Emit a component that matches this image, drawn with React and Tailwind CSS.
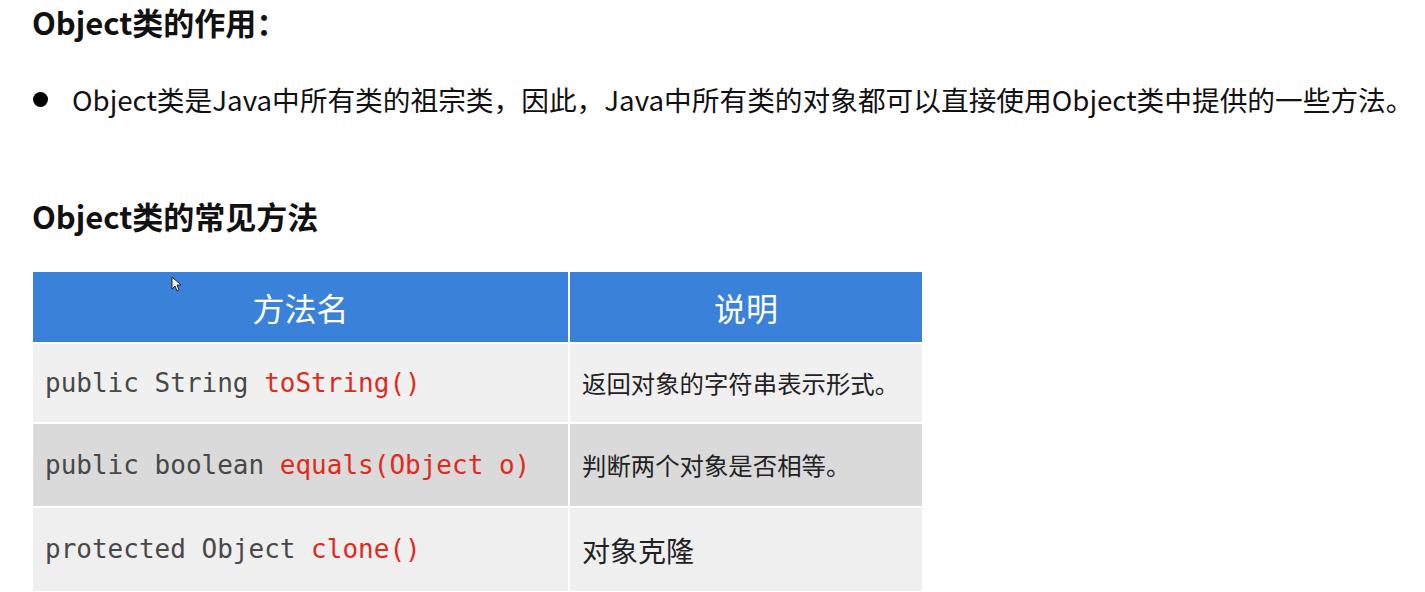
const cjk = { fontFamily: '"Noto Sans CJK SC", "Noto Sans", sans-serif' }
const mono = { fontFamily: '"DejaVu Sans Mono", "Liberation Mono", monospace' }

const rows = [
  { pre: "public String ", fn: "toString()", desc: "返回对象的字符串表示形式。", bg: "bg-[#f0f0f0]", h: "h-[78px]", dsize: "text-[24.4px]" },
  { pre: "public boolean ", fn: "equals(Object o)", desc: "判断两个对象是否相等。", bg: "bg-[#dadada]", h: "h-[82px]", dsize: "text-[24.4px]" },
  { pre: "protected Object ", fn: "clone()", desc: "对象克隆", bg: "bg-[#efefef]", h: "h-[83px]", dsize: "text-[28px]" },
]

function Cursor() {
  return (
    <svg className="absolute left-[171px] top-[276px]" width="10" height="16" viewBox="0 0 10 16">
      <path d="M1 1 L1 13 L4 10 L6 15 L8 14 L6 9 L10 9 Z" fill="#fff" stroke="#222" strokeWidth="1" />
    </svg>
  )
}

export default function App() {
  return (
    <div className="relative w-[1425px] h-[592px] overflow-hidden bg-white text-[#111]" style={cjk}>
      <div className="pl-[32px]">
        <h1 className="pt-[3px] text-[31px] leading-[38px] font-bold">Object类的作用：</h1>
        <div className="mt-[40px] flex items-center whitespace-nowrap text-[27.7px] leading-[36px] text-[#111]">
          <span className="ml-[1px] inline-block h-[15px] w-[15px] shrink-0 rounded-full bg-black" />
          <span className="ml-[24px]">Object类是Java中所有类的祖宗类，因此，Java中所有类的对象都可以直接使用Object类中提供的一些方法。</span>
        </div>
        <h2 className="mt-[80px] text-[31px] leading-[38px] font-bold">Object类的常见方法</h2>
        <div className="mt-[37px] ml-[1px] w-[889px]">
          <div className="flex h-[70px] bg-[#3a82d9] text-white text-[32px]">
            <div className="flex w-[537px] items-center justify-center border-r-2 border-white">方法名</div>
            <div className="flex flex-1 items-center justify-center">说明</div>
          </div>
          {rows.map((r) => (
            <div key={r.fn} className={`mt-[2px] flex ${r.h} ${r.bg}`}>
              <div className="flex w-[537px] items-center border-r-2 border-white pl-[12px] text-[26px] text-[#484848]" style={mono}>
                <span className="whitespace-pre">{r.pre}</span>
                <span className="text-[#e02a1c]">{r.fn}</span>
              </div>
              <div className={`flex flex-1 items-center pl-[12px] ${r.dsize} text-[#222]`}>{r.desc}</div>
            </div>
          ))}
        </div>
      </div>
      <Cursor />
    </div>
  )
}
